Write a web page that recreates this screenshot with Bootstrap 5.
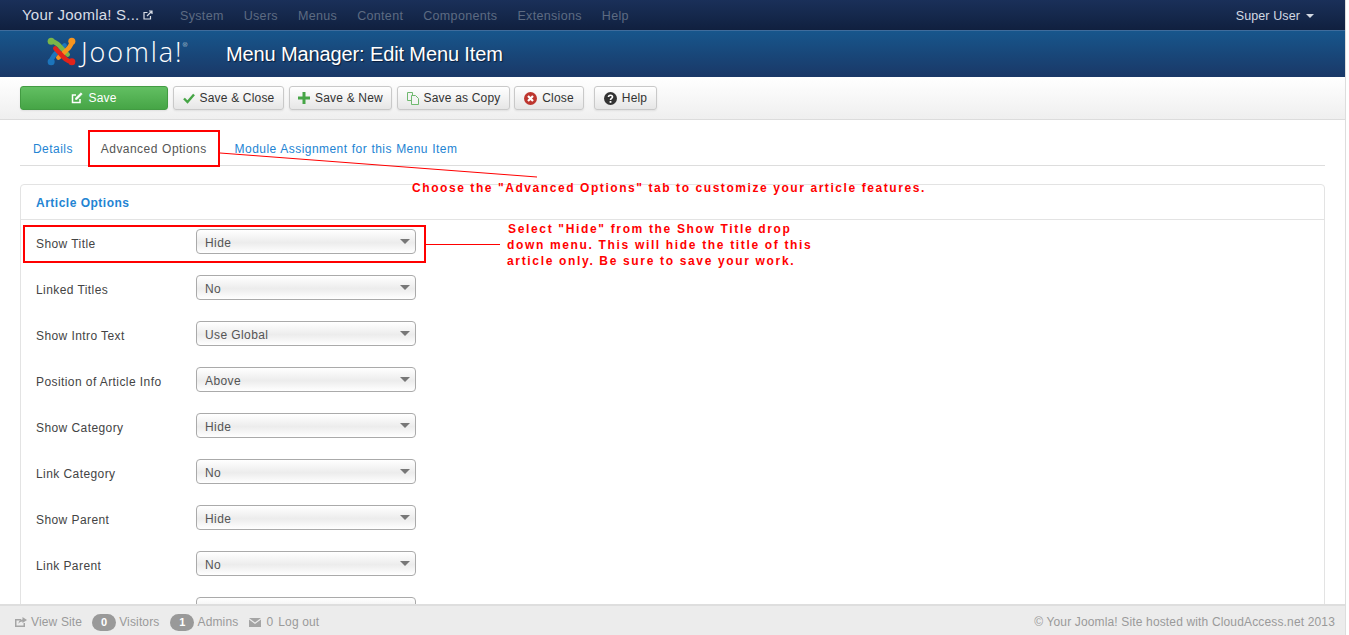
<!DOCTYPE html>
<html lang="en">
<head>
    <meta charset="UTF-8">
    <meta name="viewport" content="width=device-width, initial-scale=1.0">
    <title>Menu Manager: Edit Menu Item</title>
    <link rel="stylesheet" href="https://cdn.jsdelivr.net/npm/bootstrap@5.3.0/dist/css/bootstrap.min.css">
    <style>
        html, body { height: 100%; overflow: hidden; }
        body { font-family: "Liberation Sans", Arial, sans-serif; font-size: 12px; color: #555; background: #fff; }
        .page-shell { width: 1345px; height: 635px; position: relative; flex: none; }
        .edge-strip { flex: 1; background: #fff; border-left: 1px solid #ddd; }

        .top-bar { height: 30px; background: linear-gradient(#1a3059, #10203f); padding: 0 !important; }
        .top-brand { color: #d8dde6; font-size: 15px; letter-spacing: .22px; margin-left: 22px; width: 148px; white-space: nowrap; }
        .top-brand svg { margin-left: 4px !important; }
        .top-bar .nav-link { color: #5d6b82; font-size: 12.5px; padding: 2px 10px 0; letter-spacing: .33px; }
        .top-user { color: #d3d9e2; font-size: 12.5px; margin-right: 31px; padding-top: 2px; letter-spacing: .1px; }
        .user-caret { width: 0; height: 0; border: 4px solid transparent; border-top-color: #d3d9e2; border-bottom: 0; margin-left: 6px; }

        .title-bar { height: 47px; background: linear-gradient(#17568c, #1a3867); border-top: 1px solid #3f6c9c; }
        .logo-box { width: 180px; margin-left: 46px; margin-top: -5px; }
        .logo-word { color: #fff; font-family: "Open Sans", sans-serif; font-weight: 300; font-size: 27px; line-height: 1; letter-spacing: 1.9px; margin-left: 4px; white-space: nowrap; }
        .logo-word sup { font-size: 6px; top: -15px; margin-left: -1px; }
        .page-title { color: #fff; font-size: 20px; margin: 0; font-weight: 400; text-shadow: 1px 1px 1px #0b1d3a; letter-spacing: -.12px; }

        .tool-bar { height: 43px; background: linear-gradient(#fff, #efefef); border-bottom: 1px solid #dcdcdc; padding: 9px 0 0 20px; }
        .tool-btn { height: 24px; font-size: 12px; line-height: 1; color: #333; padding: 0; background: linear-gradient(#fff, #e6e6e6); border: 1px solid #c9c9c9; border-radius: 3px; box-shadow: 0 1px 2px rgba(0,0,0,.08); letter-spacing: .18px; white-space: nowrap; }
        .tool-btn svg { margin-right: 5px; flex: none; }
        .tool-save { width: 148px; background: linear-gradient(#62bf62, #46a546); border-color: #429b42; color: #fff; margin-right: 5px; }
        .tool-close-save { width: 111px; margin-right: 5px; }
        .tool-new { width: 103px; margin-right: 5px; }
        .tool-copy { width: 113px; margin-right: 4px; }
        .tool-close { width: 70px; margin-right: 10px; }
        .tool-help { width: 63px; }

        .work-area { height: 484px; overflow: hidden; padding: 10px 20px 0; }
        .tab-strip { height: 36px; border-bottom: 1px solid #ddd; margin-bottom: 18px; }
        .tab-strip .nav-link { border: 0; padding: 0 13px; height: 35px; line-height: 38px; font-size: 12px; color: #2384d3; letter-spacing: .45px; word-spacing: .5px; background: none; white-space: nowrap; }
        .tab-strip .nav-link.active { color: #555; padding: 0 14px; margin: 0 1px; }
        .option-card { border-color: #e3e3e3; border-radius: 4px; }
        .option-head { height: 35px; background: #fff; border-color: #e3e3e3; padding: 0 15px; line-height: 36px; font-weight: 700; color: #2384d3; letter-spacing: .5px; }
        .option-body { padding: 9px 15px 0; }
        .option-row { height: 46px; margin: 0; align-items: flex-start; }
        .option-label { width: 160px; color: #444; padding-top: 8px; letter-spacing: .42px; line-height: 14px; }
        .option-select { width: 220px; height: 25px; font-size: 12px; line-height: 1; color: #555; letter-spacing: .4px; padding: 2px 8px 0; border: 1px solid #aaa; border-radius: 4px;
            background: url("data:image/svg+xml,%3Csvg xmlns='http://www.w3.org/2000/svg' width='10' height='5'%3E%3Cpath d='M0 0h10L5 5z' fill='%23777'/%3E%3C/svg%3E") no-repeat right 5px center, linear-gradient(#fff, #ececec 55%, #fff); }

        .foot-bar { height: 31px; background: #ececec; border-top: 2px solid #dedede; color: #9a9a9a; padding: 3px 10px 0 15px; letter-spacing: .15px; }
        .foot-link { color: #9a9a9a; text-decoration: none; }
        .foot-badge { background: #999; color: #fff; font-size: 11px; font-weight: 700; width: 24px; height: 17px; padding: 0; line-height: 17px; border-radius: 9px; margin: 0 3px 0 2px; }
        .foot-gap { margin-right: 9px; }
        .foot-site { margin-right: 8px; }
        .foot-mail { margin: 0 5px 0 2px; }
        .foot-count { margin-right: 5px; }

        .mark-layer { position: absolute; left: 0; top: 0; pointer-events: none; }
        .mark-note { position: absolute; color: #f00; font-weight: 700; font-size: 12px; letter-spacing: 1.57px; line-height: 16px; white-space: nowrap; }
        .note-tab { left: 412px; top: 180px; }
        .note-show { left: 507px; top: 221px; letter-spacing: 1.66px; }
        .note-first { margin-left: 1px; }
    </style>
</head>
<body class="d-flex">
<div class="page-shell d-flex flex-column">

    <nav class="navbar top-bar flex-nowrap">
        <div class="d-flex align-items-center">
            <div class="top-brand d-flex align-items-center">Your Joomla! S...
                <svg class="ms-2" width="10" height="10" viewBox="0 0 10 10" fill="none" stroke="#d8dde6" stroke-width="1.2"><path d="M7.5 6v3H1V2.5h3.5M4 6l5-5M6 1h3v3"/></svg>
            </div>
            <ul class="nav flex-nowrap">
                <li class="nav-item"><a class="nav-link" href="#">System</a></li>
                <li class="nav-item"><a class="nav-link" href="#">Users</a></li>
                <li class="nav-item"><a class="nav-link" href="#">Menus</a></li>
                <li class="nav-item"><a class="nav-link" href="#">Content</a></li>
                <li class="nav-item"><a class="nav-link" href="#">Components</a></li>
                <li class="nav-item"><a class="nav-link" href="#">Extensions</a></li>
                <li class="nav-item"><a class="nav-link" href="#">Help</a></li>
            </ul>
        </div>
        <div class="top-user d-flex align-items-center">Super User <span class="user-caret"></span></div>
    </nav>

    <header class="title-bar d-flex align-items-center">
        <div class="logo-box d-flex align-items-center">
            <svg width="31" height="31" viewBox="0 0 30 30" fill="none" stroke-width="4.4" stroke-linecap="round">
                <g stroke="#1c75bc" fill="#1c75bc"><path d="M5 25C5 19 12 15 18 9" fill="none"/><circle cx="5" cy="25" r="3.4" stroke="none"/></g>
                <g stroke="#7ab648" fill="#7ab648"><path d="M5 5C11 5 15 12 21 18" fill="none"/><circle cx="5" cy="5" r="3.4" stroke="none"/></g>
                <g stroke="#f7941e" fill="#f7941e"><path d="M25 5C25 11 18 15 12 21" fill="none"/><circle cx="25" cy="5" r="3.4" stroke="none"/></g>
                <g stroke="#e2231a" fill="#e2231a"><path d="M25 25C19 25 15 18 9 12" fill="none"/><circle cx="25" cy="25" r="3.4" stroke="none"/></g>
            </svg>
            <span class="logo-word">Joomla!<sup>®</sup></span>
        </div>
        <h1 class="page-title">Menu Manager: Edit Menu Item</h1>
    </header>

    <div class="tool-bar d-flex">
        <button class="btn tool-btn tool-save d-inline-flex align-items-center justify-content-center">
            <svg width="12" height="12" viewBox="0 0 12 12" fill="none" stroke="#fff" stroke-width="1.5"><path d="M9 7v3.500H1.500V3H5"/><path d="M4.500 7.500V6L10 .8l1.200 1.300L6 7.500z" fill="#fff" stroke-width=".6"/></svg>Save
        </button>
        <button class="btn tool-btn tool-close-save d-inline-flex align-items-center justify-content-center">
            <svg width="12" height="11" viewBox="0 0 12 11" fill="none" stroke="#46a546" stroke-width="2.400"><path d="M1 5.500l3.500 3.500L11 1.500"/></svg>Save &amp; Close
        </button>
        <button class="btn tool-btn tool-new d-inline-flex align-items-center justify-content-center">
            <svg width="12" height="12" viewBox="0 0 12 12" fill="#46a546"><path d="M4.500 0h3v4.500H12v3H7.500V12h-3V7.500H0v-3h4.500z"/></svg>Save &amp; New
        </button>
        <button class="btn tool-btn tool-copy d-inline-flex align-items-center justify-content-center">
            <svg width="12" height="13" viewBox="0 0 12 13" fill="#f4f4f4" stroke="#6fb96f"><path d="M.5.5h5v8h-5z"/><path d="M4.500 3.500h4l3 3v6h-7z"/></svg>Save as Copy
        </button>
        <button class="btn tool-btn tool-close d-inline-flex align-items-center justify-content-center">
            <svg width="13" height="13" viewBox="0 0 13 13"><circle cx="6.500" cy="6.500" r="6.500" fill="#bd362f"/><path d="M4 4l5 5M9 4l-5 5" stroke="#fff" stroke-width="2.200"/></svg>Close
        </button>
        <button class="btn tool-btn tool-help d-inline-flex align-items-center justify-content-center">
            <svg width="13" height="13" viewBox="0 0 13 13"><circle cx="6.500" cy="6.500" r="6.500" fill="#333"/><path d="M4.500 5c0-2.300 4-2.300 4 0 0 1.500-2 1.300-2 3" fill="none" stroke="#fff" stroke-width="1.600"/><rect x="5.600" y="9" width="1.800" height="1.800" fill="#fff"/></svg>Help
        </button>
    </div>

    <main class="work-area flex-grow-1">
        <ul class="nav nav-tabs tab-strip flex-nowrap">
            <li class="nav-item"><a class="nav-link" href="#">Details</a></li>
            <li class="nav-item"><a class="nav-link active" href="#">Advanced Options</a></li>
            <li class="nav-item"><a class="nav-link" href="#">Module Assignment for this Menu Item</a></li>
        </ul>
        <div class="card option-card">
            <div class="card-header option-head">Article Options</div>
            <div class="option-body" id="option-rows"></div>
        </div>
    </main>

    <footer class="foot-bar d-flex align-items-center justify-content-between">
        <div class="d-flex align-items-center">
            <svg class="me-1" width="12" height="10" viewBox="0 0 12 10" fill="#a5a5a5"><path d="M0 2h6v1.500H1.500v5h7V6H10v4H0z"/><path d="M7.500 0L12 3 7.500 6V4.500C5.500 4.500 4 5.500 3.500 7c0-3 1.500-4.500 4-4.500z"/></svg>
            <a class="foot-link foot-site" href="#">View Site</a>
            <span class="badge foot-badge">0</span><span class="foot-gap">Visitors</span>
            <span class="badge foot-badge">1</span><span class="foot-gap">Admins</span>
            <svg class="foot-mail" width="12" height="9" viewBox="0 0 12 9" fill="#a5a5a5"><path d="M0 0h12L6 4.500z"/><path d="M0 1.500v7.500h12V1.500L6 6z"/></svg>
            <span class="foot-count">0</span>
            <a class="foot-link" href="#">Log out</a>
        </div>
        <div>© Your Joomla! Site hosted with CloudAccess.net 2013</div>
    </footer>

    <svg class="mark-layer" width="1345" height="300" fill="none" stroke="#f00">
        <rect x="89" y="131" width="130" height="35" stroke-width="2"/>
        <rect x="24" y="226" width="401" height="36" stroke-width="2"/>
        <path d="M220 153L537 177M426 244.500H500"/>
    </svg>
    <div class="mark-note note-tab">Choose the "Advanced Options" tab to customize your article features.</div>
    <div class="mark-note note-show"><span class="note-first">Select "Hide" from the Show Title drop</span><br>down menu. This will hide the title of this<br>article only. Be sure to save your work.</div>
</div>
<div class="edge-strip"></div>

<script src="https://cdn.jsdelivr.net/npm/bootstrap@5.3.0/dist/js/bootstrap.bundle.min.js"></script>
<script>
    const options = [
        ["Show Title", "Hide"],
        ["Linked Titles", "No"],
        ["Show Intro Text", "Use Global"],
        ["Position of Article Info", "Above"],
        ["Show Category", "Hide"],
        ["Link Category", "No"],
        ["Show Parent", "Hide"],
        ["Link Parent", "No"],
        ["", "Use Global"]
    ];

    document.getElementById("option-rows").innerHTML = options.map(([label, value]) => `
        <div class="d-flex option-row">
            <div class="option-label">${label}</div>
            <select class="form-select option-select"><option>${value}</option></select>
        </div>
    `).join("");
</script>
</body>
</html>
